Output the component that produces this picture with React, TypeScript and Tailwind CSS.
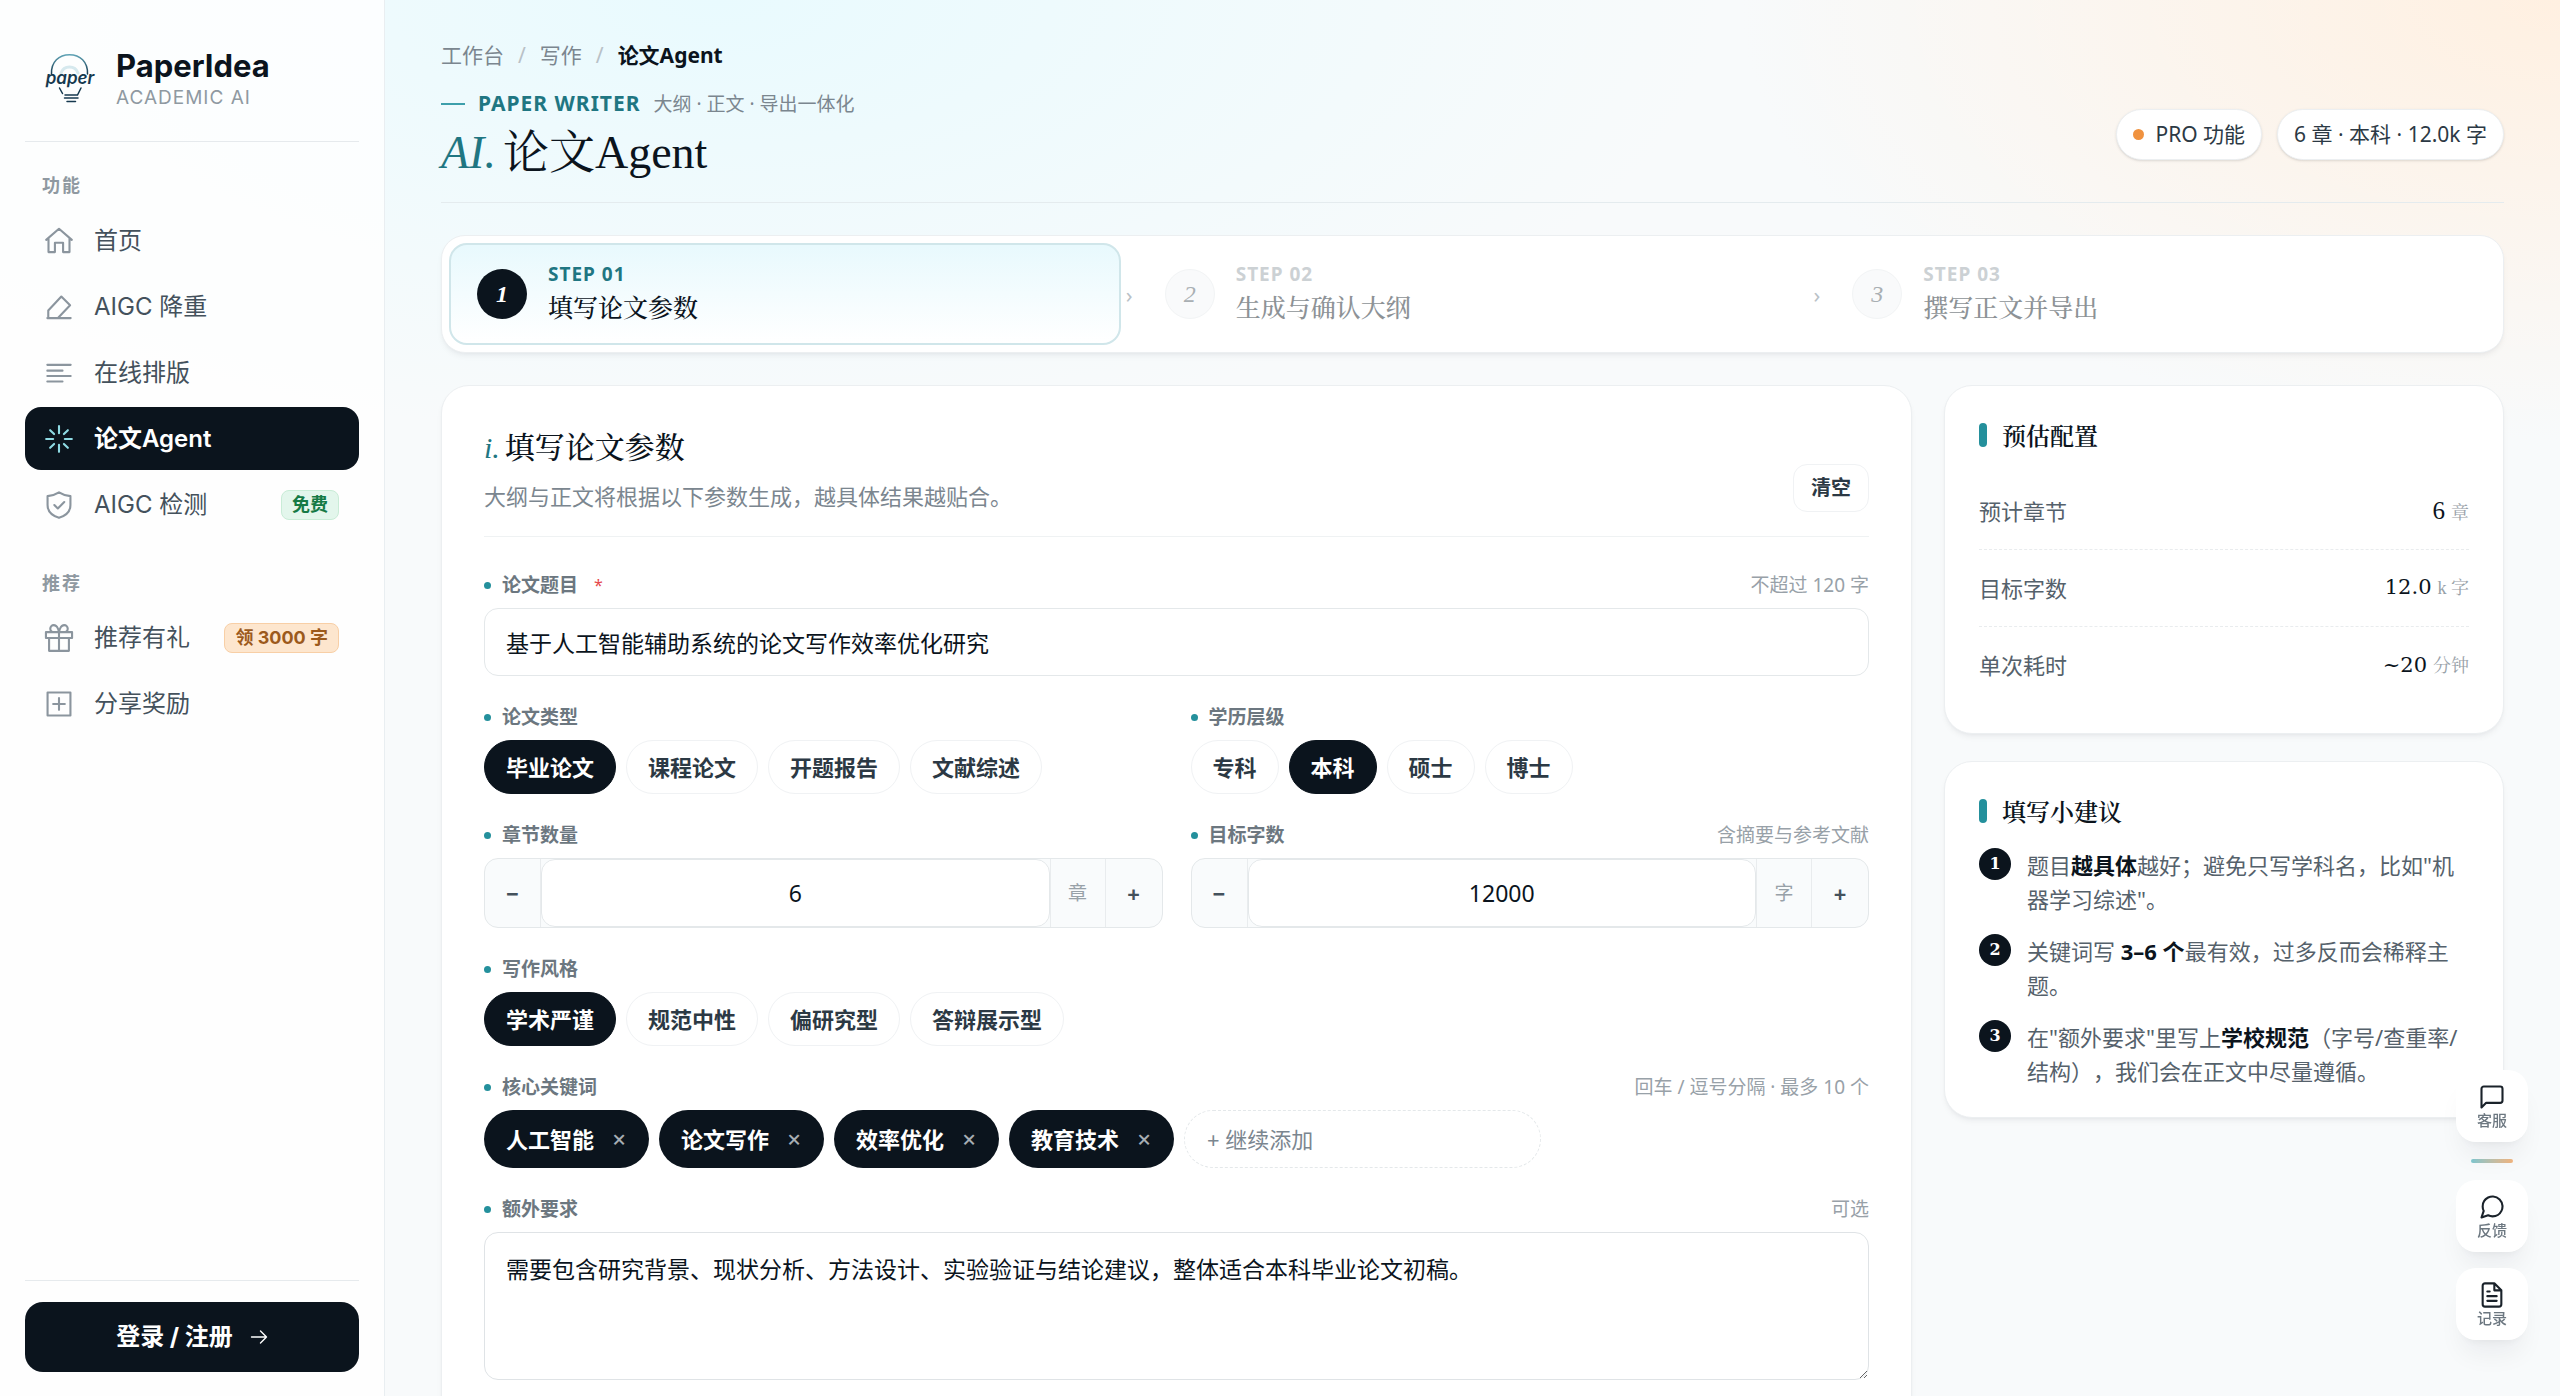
import { useState } from "react";
import type { ReactNode } from "react";

const navMain = [
  { label: "首页", icon: "home" },
  { label: "AIGC 降重", icon: "pen" },
  { label: "在线排版", icon: "lines" },
  { label: "论文Agent", icon: "burst", active: true },
  { label: "AIGC 检测", icon: "shield", badge: "免费", badgeTone: "green" },
];

const navExtra = [
  { label: "推荐有礼", icon: "gift", badge: "领 3000 字", badgeTone: "orange" },
  { label: "分享奖励", icon: "plus" },
];

const steps = [
  { no: 1, eyebrow: "STEP 01", title: "填写论文参数" },
  { no: 2, eyebrow: "STEP 02", title: "生成与确认大纲" },
  { no: 3, eyebrow: "STEP 03", title: "撰写正文并导出" },
];

const iconPaths: Record<string, ReactNode> = {
  home: <path d="M1 11 12 1.5 23 11M3 9.5v12h5.5v-8h7v8H21v-12" />,
  pen: <path d="M2 21.5h20M2.8 21v-6L14 3l7.5 7.5L11.5 21" />,
  lines: <path d="M2 5h20M2 10h13M2 14.6h20M2 19.3h13" />,
  burst: (
    <path d="M12 1v6M12 17v6M1 12h6M17 12h6M4.4 4.4l3.4 3.4M16.2 16.2l3.4 3.4M4.4 19.6l3.4-3.4M16.2 7.8l3.4-3.4" />
  ),
  shield: (
    <path d="M12 1.2c3 2 6 2.800 9.800 3.200v7.600c0 5.500-4 9.200-9.800 11C6.200 21.200 2.200 17.500 2.200 12V4.400C6 4 9 3.200 12 1.200zM8 12l3 3 5.500-5.500" />
  ),
  gift: (
    <path d="M3.500 12v11h17V12M.8 7h22.400v5H.8zM12 23V7M12 7H7.500a3 3 0 0 1 0-6C11 1 12 7 12 7zM12 7h4.500a3 3 0 0 0 0-6C13 1 12 7 12 7z" />
  ),
  plus: <path d="M2.200 2.200h19.600v19.600H2.200zM12 7v10M7 12h10" />,
  message: <path d="M21 15a2 2 0 0 1-2 2H7l-4 4V5a2 2 0 0 1 2-2h14a2 2 0 0 1 2 2z" />,
  bubble: (
    <path d="M21 11.500a8.380 8.380 0 0 1-.9 3.800 8.500 8.500 0 0 1-7.600 4.700 8.380 8.380 0 0 1-3.800-.9L3 21l1.900-5.700a8.380 8.380 0 0 1-.9-3.800 8.500 8.500 0 0 1 4.700-7.600 8.380 8.380 0 0 1 3.800-.9h.5a8.480 8.480 0 0 1 8 8z" />
  ),
  file: <path d="M14 2H6a2 2 0 0 0-2 2v16a2 2 0 0 0 2 2h12a2 2 0 0 0 2-2V8zM14 2v6h6M16 13H8M16 17H8M10 9H8" />,
  arrow: <path d="M2 12h20M14 4l8 8-8 8" />,
};

function Icon({ name, className }: { name: string; className: string }) {
  return (
    <svg
      viewBox="0 0 24 24"
      fill="none"
      stroke="currentColor"
      strokeWidth="1.8"
      strokeLinecap="round"
      strokeLinejoin="round"
      aria-hidden="true"
      className={`shrink-0 overflow-visible ${className}`}
    >
      {iconPaths[name]}
    </svg>
  );
}

function Logo() {
  return (
    <svg viewBox="0 0 50 50" fill="none" strokeLinecap="round" className="h-[50px] w-[50px] shrink-0 overflow-visible">
      <defs>
        <linearGradient id="bulb" x1="0" y1="0" x2="0" y2="1">
          <stop offset="0" stopColor="#5fa3b5" />
          <stop offset="1" stopColor="#16394f" />
        </linearGradient>
      </defs>
      <path d="M6.500 21C6 9 14 1.700 24.500 1.700S43 9 42.500 21" stroke="url(#bulb)" strokeWidth="1.500" />
      <path d="M16 20a9 9 0 0 1 17 0" stroke="#d6e9ee" strokeWidth="3" />
      <text
        x="25"
        y="31"
        textAnchor="middle"
        fill="#16394f"
        className="font-['Inter',sans-serif] text-[17px] font-semibold italic"
      >
        paper
      </text>
      <path d="M14.500 35l3 5.500M36 35l-3.500 7H20M19.500 45H33M22 48.500h8.500" stroke="#16394f" strokeWidth="1.500" />
    </svg>
  );
}

type NavItem = { label: string; icon: string; active?: boolean; badge?: string; badgeTone?: string };

function NavLink({ item }: { item: NavItem }) {
  return (
    <a
      href="#"
      aria-current={item.active ? "page" : undefined}
      className={`flex h-[63px] items-center gap-[21px] rounded-2xl px-5 text-2xl ${
        item.active ? "bg-[#0b141d] font-semibold text-white" : "text-[#44515c]"
      }`}
    >
      <Icon name={item.icon} className={`h-7 w-7 ${item.active ? "text-[#8fdbe4]" : "text-[#8b959e]"}`} />
      <span className="whitespace-nowrap">{item.label}</span>
      {item.badge && (
        <span
          className={`ml-auto flex h-[30px] items-center rounded-lg border px-[10px] text-lg font-bold whitespace-nowrap ${
            item.badgeTone === "green"
              ? "border-[#c9ecd7] bg-[#e3f6ec] text-[#157a45]"
              : "border-[#f8cfa6] bg-[#fde6ce] text-[#9c5a1c]"
          }`}
        >
          {item.badge}
        </span>
      )}
    </a>
  );
}

function Sidebar() {
  return (
    <aside className="flex w-[385px] shrink-0 flex-col border-r border-[#e9eef1] bg-white/80 px-[25px] pb-6 font-['Inter','Noto_Sans_CJK_SC',sans-serif]">
      <div className="flex items-center gap-[21px] border-b border-[#e6eaed] pt-[46px] pr-5 pb-[31px] pl-5">
        <Logo />
        <div>
          <div className="h-10 text-[31px] leading-10 font-bold text-[#0b141d]">PaperIdea</div>
          <div className="h-6 text-[19px] leading-6 tracking-[1px] text-[#8f99a1]">ACADEMIC AI</div>
        </div>
      </div>
      <h2 className="mt-7 mb-[7px] h-8 pl-[17px] text-lg leading-8 font-bold tracking-[2px] text-[#8f99a1]">功能</h2>
      <nav className="flex flex-col gap-[3px]">
        {navMain.map((item) => (
          <NavLink key={item.label} item={item} />
        ))}
      </nav>
      <h2 className="mt-8 mb-[6px] h-8 pl-[17px] text-lg leading-8 font-bold tracking-[2px] text-[#8f99a1]">推荐</h2>
      <nav className="flex flex-col gap-[3px]">
        {navExtra.map((item) => (
          <NavLink key={item.label} item={item} />
        ))}
      </nav>
      <div className="mt-auto border-t border-[#e6eaed] pt-[21px]">
        <button className="flex h-[70px] w-full items-center justify-center gap-[17px] rounded-[18px] bg-[#0b141d] text-2xl font-bold text-white">
          登录 / 注册
          <Icon name="arrow" className="h-[18px] w-[18px]" />
        </button>
      </div>
    </aside>
  );
}

function Header() {
  return (
    <header>
      <nav className="flex h-8 items-center gap-[14px] text-[21px] text-[#7b868f]">
        <a href="#">工作台</a>
        <span className="text-[#b9c1c7]">/</span>
        <a href="#">写作</a>
        <span className="text-[#b9c1c7]">/</span>
        <span className="font-bold text-[#0b141d]">论文Agent</span>
      </nav>
      <div className="mt-4 flex items-center justify-between border-b border-[#e4ebee] pb-[21px]">
        <div>
          <div className="flex h-8 items-center gap-[13px] text-[#7b868f]">
            <span className="h-0.5 w-6 bg-[#3d9fab]" />
            <span className="text-[21px] font-bold tracking-[1px] text-[#1f7682]">PAPER WRITER</span>
            <span className="text-[19px]">大纲 · 正文 · 导出一体化</span>
          </div>
          <h1 className="mt-[5px] h-14 font-['Liberation_Serif','Noto_Serif_CJK_SC','Noto_Sans_CJK_SC',serif] text-[46px] leading-14 text-[#0b141d]">
            <em className="mr-[7px] text-[#1f7682]">AI.</em>论文Agent
          </h1>
        </div>
        <div className="flex gap-[15px] text-[21px] text-[#2c3944]">
          <span className="flex h-[51px] items-center gap-[11px] rounded-full border border-[#eceff1] bg-white px-4 shadow-sm">
            <i className="h-[11px] w-[11px] rounded-full bg-[#f0923f]" />
            PRO 功能
          </span>
          <span className="flex h-[51px] items-center rounded-full border border-[#eceff1] bg-white px-4 shadow-sm">
            6 章 · 本科 · 12.0k 字
          </span>
        </div>
      </div>
    </header>
  );
}

function StepBar() {
  return (
    <ol className="mt-8 grid grid-cols-3 gap-4 rounded-3xl border border-[#eceff1] bg-white p-[7px] shadow-md shadow-slate-900/5">
      {steps.map((step) => {
        const active = step.no === 1;
        return (
          <li
            key={step.no}
            className={`relative flex h-[102px] items-center gap-[21px] rounded-[18px] border-2 px-[26px] ${
              active ? "border-[#d0e6ea] bg-linear-to-b from-[#e8f9fd] to-white" : "border-transparent"
            }`}
          >
            <span
              className={`flex h-[50px] w-[50px] items-center justify-center rounded-full font-['Liberation_Serif',serif] text-2xl italic ${
                active ? "bg-[#0b141d] font-semibold text-white" : "border border-[#f2f4f5] bg-[#f9fafb] text-[#a9afb3]"
              }`}
            >
              {step.no}
            </span>
            <div className="pb-1">
              <div
                className={`h-7 text-[19px] leading-7 font-bold tracking-[1px] ${
                  active ? "text-[#1f7682]" : "text-[#ccd1d4]"
                }`}
              >
                {step.eyebrow}
              </div>
              <div
                className={`h-9 font-['Noto_Serif_CJK_SC','Noto_Sans_CJK_SC',serif] text-[25px] leading-9 font-medium ${
                  active ? "text-[#0b141d]" : "text-[#8d9296]"
                }`}
              >
                {step.title}
              </div>
            </div>
            {step.no < 3 && (
              <span className="absolute top-1/2 -right-[14px] -translate-y-1/2 text-[22px] text-[#b9c1c7]">›</span>
            )}
          </li>
        );
      })}
    </ol>
  );
}

function Field({
  id,
  label,
  hint,
  required,
  children,
}: {
  id: string;
  label: string;
  hint?: string;
  required?: boolean;
  children: ReactNode;
}) {
  return (
    <div>
      <div className="mb-[9px] flex h-7 items-center">
        <label
          id={`${id}-label`}
          htmlFor={id}
          className="flex items-center text-[19px] font-bold text-[#6c7780]"
        >
          <i className="mr-[11px] h-[7px] w-[7px] rounded-full bg-[#24909c]" />
          {label}
          {required && <span className="ml-4 text-base font-normal text-[#e5484d]">*</span>}
        </label>
        {hint && <span className="ml-auto text-[19px] text-[#98a1a8]">{hint}</span>}
      </div>
      {children}
    </div>
  );
}

function ChipGroup({ id, options, initial }: { id: string; options: string[]; initial: string }) {
  const [value, setValue] = useState(initial);
  return (
    <div id={id} role="group" aria-labelledby={`${id}-label`} className="flex flex-wrap gap-[10px]">
      {options.map((option) => (
        <button
          key={option}
          type="button"
          aria-pressed={option === value}
          onClick={() => setValue(option)}
          className={`h-[54px] rounded-full border px-[21px] text-[22px] font-bold ${
            option === value ? "border-[#0b141d] bg-[#0b141d] text-white" : "border-[#f0f2f4] bg-white text-[#2c3944]"
          }`}
        >
          {option}
        </button>
      ))}
    </div>
  );
}

function NumberBox({ id, initial, step, unit }: { id: string; initial: number; step: number; unit: string }) {
  const [value, setValue] = useState(initial);
  return (
    <div className="flex h-[70px] overflow-hidden rounded-[14px] border border-[#e4e8ea] bg-[#f9fbfc]">
      <button
        type="button"
        aria-label="减少"
        onClick={() => setValue(value - step)}
        className="w-14 shrink-0 border-r border-[#e9ecee] text-[22px] font-bold text-[#44515c]"
      >
        −
      </button>
      <input
        id={id}
        value={value}
        onChange={(e) => setValue(Number(e.target.value) || 0)}
        className="min-w-0 flex-1 rounded-[14px] border border-[#e4e8ea] bg-white text-center text-[23px] text-[#0b141d] outline-none"
      />
      <span className="flex w-14 shrink-0 items-center justify-center border-r border-l border-[#e9ecee] text-[19px] text-[#98a1a8]">
        {unit}
      </span>
      <button
        type="button"
        aria-label="增加"
        onClick={() => setValue(value + step)}
        className="w-14 shrink-0 text-[22px] font-bold text-[#44515c]"
      >
        +
      </button>
    </div>
  );
}

function Keywords() {
  const [tags, setTags] = useState(["人工智能", "论文写作", "效率优化", "教育技术"]);
  return (
    <div className="flex flex-wrap gap-[10px]">
      {tags.map((tag) => (
        <span
          key={tag}
          className="flex h-[58px] items-center rounded-full bg-[#0b141d] pr-[21px] pl-[22px] text-[22px] font-bold text-white"
        >
          {tag}
          <button
            type="button"
            aria-label={`删除 ${tag}`}
            onClick={() => setTags(tags.filter((t) => t !== tag))}
            className="ml-4 w-[18px] text-center text-2xl font-medium text-[#a6adb3]"
          >
            ×
          </button>
        </span>
      ))}
      <input
        id="keywords"
        placeholder="+ 继续添加"
        className="h-[58px] w-[357px] rounded-full border border-dashed border-[#e4e8ea] bg-white px-[22px] text-[22px] outline-none placeholder:text-[#7b868f]"
      />
    </div>
  );
}

function ParamForm() {
  return (
    <form className="min-w-0 flex-1 rounded-[28px] border border-[#eceff1] bg-white px-[42px] pt-[42px] pb-12 shadow-md shadow-slate-900/5">
      <div className="flex items-end justify-between border-b border-[#eff2f3] pb-6">
        <div>
          <h2 className="h-10 font-['Liberation_Serif','Noto_Serif_CJK_SC','Noto_Sans_CJK_SC',serif] text-3xl leading-10 font-medium text-[#0b141d]">
            <em className="mr-[5px] text-[#1f7682]">i.</em>填写论文参数
          </h2>
          <p className="mt-3 h-8 text-[22px] leading-8 text-[#7b868f]">
            大纲与正文将根据以下参数生成，越具体结果越贴合。
          </p>
        </div>
        <button
          type="button"
          className="h-12 rounded-[14px] border border-[#f0f2f4] bg-white px-[17px] text-xl font-semibold text-[#2c3944]"
        >
          清空
        </button>
      </div>
      <div className="mt-[34px] flex flex-col gap-[27px]">
        <Field id="title" label="论文题目" hint="不超过 120 字" required>
          <input
            id="title"
            defaultValue="基于人工智能辅助系统的论文写作效率优化研究"
            className="h-[68px] w-full rounded-[14px] border border-[#e4e8ea] bg-white px-[21px] text-[23px] text-[#0b141d] outline-none"
          />
        </Field>
        <div className="grid grid-cols-2 gap-x-7 gap-y-[27px]">
          <Field id="kind" label="论文类型">
            <ChipGroup id="kind" options={["毕业论文", "课程论文", "开题报告", "文献综述"]} initial="毕业论文" />
          </Field>
          <Field id="level" label="学历层级">
            <ChipGroup id="level" options={["专科", "本科", "硕士", "博士"]} initial="本科" />
          </Field>
          <Field id="chapters" label="章节数量">
            <NumberBox id="chapters" initial={6} step={1} unit="章" />
          </Field>
          <Field id="words" label="目标字数" hint="含摘要与参考文献">
            <NumberBox id="words" initial={12000} step={1000} unit="字" />
          </Field>
        </div>
        <Field id="style" label="写作风格">
          <ChipGroup id="style" options={["学术严谨", "规范中性", "偏研究型", "答辩展示型"]} initial="学术严谨" />
        </Field>
        <Field id="keywords" label="核心关键词" hint="回车 / 逗号分隔 · 最多 10 个">
          <Keywords />
        </Field>
        <Field id="extra" label="额外要求" hint="可选">
          <textarea
            id="extra"
            defaultValue="需要包含研究背景、现状分析、方法设计、实验验证与结论建议，整体适合本科毕业论文初稿。"
            className="block h-[148px] w-full rounded-[14px] border border-[#dfe3e6] bg-white px-[21px] py-[18px] text-[23px] leading-9 text-[#0b141d] outline-none"
          />
        </Field>
      </div>
    </form>
  );
}

function SideCard({ title, children }: { title: string; children: ReactNode }) {
  return (
    <section className="rounded-[28px] border border-[#eceff1] bg-white px-[34px] pt-[33px] pb-[29px] shadow-md shadow-slate-900/5">
      <h3 className="flex h-8 items-center gap-[15px] font-['Noto_Serif_CJK_SC','Noto_Sans_CJK_SC',serif] text-2xl font-semibold text-[#0b141d]">
        <i className="h-6 w-2 rounded-full bg-[#24909c]" />
        {title}
      </h3>
      {children}
    </section>
  );
}

function EstimateRow({ label, children }: { label: string; children: ReactNode }) {
  return (
    <div className="flex h-[77px] items-center justify-between border-b border-dashed border-[#e9ecee] last:border-0">
      <dt className="text-[22px] text-[#55616b]">{label}</dt>
      <dd className="flex items-baseline gap-1.5 font-['DejaVu_Serif','Noto_Serif_CJK_SC','Noto_Sans_CJK_SC',serif] text-[21px] text-[#0b141d]">
        {children}
      </dd>
    </div>
  );
}

function Tip({ no, children }: { no: number; children: ReactNode }) {
  return (
    <li className="flex gap-4">
      <span className="flex h-8 w-8 shrink-0 items-center justify-center rounded-full bg-[#0b141d] font-['DejaVu_Serif',serif] text-base font-semibold text-white">
        {no}
      </span>
      <p className="text-[22px] leading-[34px] text-[#55616b] [text-spacing-trim:space-all]">{children}</p>
    </li>
  );
}

function SidePanel() {
  return (
    <div className="flex w-[560px] shrink-0 flex-col gap-[27px]">
      <SideCard title="预估配置">
        <dl className="mt-[22px]">
          <EstimateRow label="预计章节">
            <span className="font-['Liberation_Serif',serif] text-[25px]">6</span>
            <small className="text-lg text-[#98a1a8]">章</small>
          </EstimateRow>
          <EstimateRow label="目标字数">
            12.0
            <small className="font-['Liberation_Serif','Noto_Serif_CJK_SC','Noto_Sans_CJK_SC',serif] text-lg text-[#98a1a8]">
              k 字
            </small>
          </EstimateRow>
          <EstimateRow label="单次耗时">
            ~20 <small className="text-lg text-[#98a1a8]">分钟</small>
          </EstimateRow>
        </dl>
      </SideCard>
      <SideCard title="填写小建议">
        <ol className="mt-[21px] flex flex-col gap-[18px]">
          <Tip no={1}>
            题目<b className="text-[#0b141d]">越具体</b>越好；避免只写学科名，比如"机器学习综述"。
          </Tip>
          <Tip no={2}>
            关键词写 <b className="text-[#0b141d]">3–6 个</b>最有效，过多反而会稀释主题。
          </Tip>
          <Tip no={3}>
            在"额外要求"里写上<b className="text-[#0b141d]">学校规范</b>（字号/查重率/结构），我们会在正文中尽量遵循。
          </Tip>
        </ol>
      </SideCard>
    </div>
  );
}

function DockButton({ icon, label }: { icon: string; label: string }) {
  return (
    <button className="flex h-[72px] w-[72px] flex-col items-center justify-center rounded-[20px] bg-white text-[15px] leading-[18px] font-medium text-[#6c7780] shadow-xl shadow-slate-900/5">
      <Icon name={icon} className="h-7 w-7 text-[#1a222a]" />
      {label}
    </button>
  );
}

function Dock() {
  return (
    <div className="fixed right-8 bottom-14 flex flex-col items-center">
      <DockButton icon="message" label="客服" />
      <span className="my-[17px] h-1 w-[42px] rounded-full bg-linear-to-r from-[#7cc4cd] to-[#efb27c]" />
      <div className="flex flex-col gap-4">
        <DockButton icon="bubble" label="反馈" />
        <DockButton icon="file" label="记录" />
      </div>
    </div>
  );
}

export default function App() {
  return (
    <div className="flex h-screen overflow-hidden bg-[#f8fafb] bg-[radial-gradient(ellipse_1000px_440px_at_28%_0%,#e9fafe,transparent),radial-gradient(ellipse_820px_440px_at_100%_0%,#fff0e1,transparent)] font-['Noto_Sans','Noto_Sans_CJK_SC',sans-serif]">
      <Sidebar />
      <main className="min-w-0 flex-1 overflow-hidden px-14 pt-10">
        <Header />
        <StepBar />
        <div className="mt-8 flex items-start gap-8">
          <ParamForm />
          <SidePanel />
        </div>
      </main>
      <Dock />
    </div>
  );
}
